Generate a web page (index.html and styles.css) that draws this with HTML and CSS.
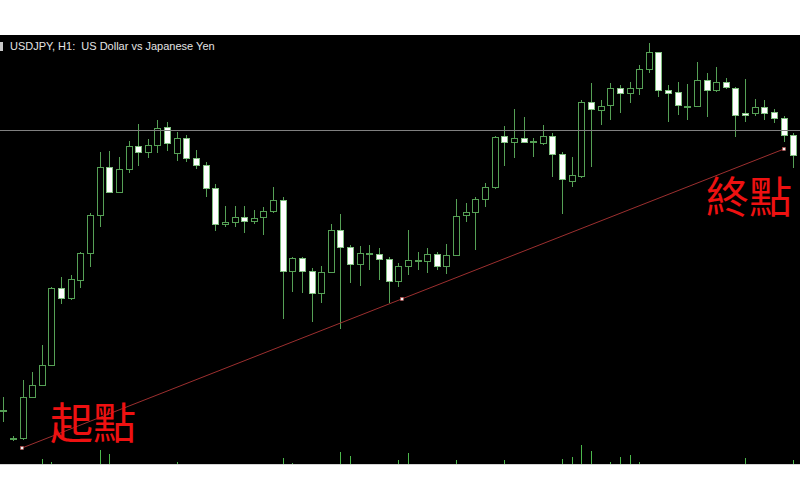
FILE: index.html
```html
<!DOCTYPE html>
<html lang="zh-Hant">
<head>
<meta charset="utf-8">
<title>USDJPY H1</title>
<link rel="stylesheet" href="styles.css">
</head>
<body>
<div class="chart">
  <div class="title"><span class="title-icon"></span><span class="title-text">USDJPY, H1:  US Dollar vs Japanese Yen</span></div>
  <svg class="plot" width="800" height="429" viewBox="0 35 800 429" xmlns="http://www.w3.org/2000/svg">
    <g class="volumes">
      <path d="M42.5 459V464 M51.5 462V464 M100.5 450V464 M109.5 454V464 M177.5 462V464 M283.5 458V464 M292.5 463V464 M340.5 452V464 M350.5 456V464 M398.5 460V464 M408.5 453V464 M456.5 460V464 M504.5 460V464 M562.5 459V464 M572.5 457V464 M581.5 445V464 M591.5 451V464 M610.5 462V464 M620.5 457V464 M630.5 455V464 M639.5 462V464 M745.5 458V464 M793.5 460V464"/>
    </g>
    <path class="wicks" d="M3.5 397V422 M13.5 436V441 M23.5 380V440 M32.5 372V397 M42.5 345V385 M51.5 287V365 M61.5 277V304 M71.5 275V300 M80.5 252V288 M90.5 213V267 M100.5 152V227 M109.5 151V192 M119.5 157V192 M129.5 141V173 M138.5 124V166 M148.5 139V158 M157.5 120V153 M167.5 122V151 M177.5 132V161 M186.5 135V162 M196.5 150V169 M206.5 162V197 M215.5 184V231 M225.5 206V227 M235.5 206V227 M244.5 206V233 M254.5 210V224 M263.5 207V235 M273.5 187V213 M283.5 197V319 M292.5 257V292 M302.5 257V293 M312.5 268V322 M321.5 266V303 M331.5 224V273 M340.5 214V329 M350.5 245V283 M360.5 246V286 M369.5 245V270 M379.5 248V280 M389.5 257V303 M398.5 263V287 M408.5 230V275 M418.5 252V270 M427.5 248V273 M437.5 252V270 M446.5 244V274 M456.5 199V255 M466.5 203V222 M475.5 197V250 M485.5 183V207 M495.5 136V189 M504.5 126V166 M514.5 109V158 M524.5 117V143 M533.5 138V157 M543.5 125V145 M552.5 133V177 M562.5 152V214 M572.5 157V187 M581.5 100V178 M591.5 83V167 M601.5 100V125 M610.5 83V120 M620.5 85V113 M630.5 82V103 M639.5 65V95 M649.5 43V73 M658.5 52V97 M668.5 85V122 M678.5 82V115 M687.5 84V120 M697.5 62V107 M707.5 73V117 M716.5 67V92 M726.5 78V89 M735.5 87V137 M745.5 79V122 M755.5 99V116 M764.5 100V120 M774.5 109V123 M784.5 116V142 M793.5 133V168"/>
    <g class="bull">
      <rect x="0.5" y="410.5" width="6" height="1"/>
      <rect x="10.5" y="438.5" width="6" height="1"/>
      <rect x="20.5" y="397.5" width="6" height="41"/>
      <rect x="29.5" y="385.5" width="6" height="12"/>
      <rect x="39.5" y="365.5" width="6" height="20"/>
      <rect x="48.5" y="288.5" width="6" height="77"/>
      <rect x="68.5" y="279.5" width="6" height="19"/>
      <rect x="77.5" y="253.5" width="6" height="27"/>
      <rect x="87.5" y="215.5" width="6" height="38"/>
      <rect x="97.5" y="167.5" width="6" height="48"/>
      <rect x="116.5" y="169.5" width="6" height="23"/>
      <rect x="126.5" y="146.5" width="6" height="23"/>
      <rect x="145.5" y="145.5" width="6" height="7"/>
      <rect x="154.5" y="128.5" width="6" height="17"/>
      <rect x="174.5" y="138.5" width="6" height="15"/>
      <rect x="222.5" y="222.5" width="6" height="2"/>
      <rect x="232.5" y="217.5" width="6" height="5"/>
      <rect x="251.5" y="218.5" width="6" height="3"/>
      <rect x="260.5" y="211.5" width="6" height="6"/>
      <rect x="270.5" y="200.5" width="6" height="11"/>
      <rect x="289.5" y="258.5" width="6" height="13"/>
      <rect x="318.5" y="272.5" width="6" height="21"/>
      <rect x="328.5" y="230.5" width="6" height="42"/>
      <rect x="357.5" y="253.5" width="6" height="11"/>
      <rect x="366.5" y="253.5" width="6" height="1"/>
      <rect x="395.5" y="266.5" width="6" height="15"/>
      <rect x="405.5" y="260.5" width="6" height="6"/>
      <rect x="415.5" y="260.5" width="6" height="1"/>
      <rect x="424.5" y="254.5" width="6" height="7"/>
      <rect x="443.5" y="255.5" width="6" height="11"/>
      <rect x="453.5" y="216.5" width="6" height="39"/>
      <rect x="463.5" y="212.5" width="6" height="3"/>
      <rect x="472.5" y="199.5" width="6" height="13"/>
      <rect x="482.5" y="187.5" width="6" height="12"/>
      <rect x="492.5" y="137.5" width="6" height="50"/>
      <rect x="511.5" y="138.5" width="6" height="4"/>
      <rect x="530.5" y="141.5" width="6" height="1"/>
      <rect x="540.5" y="136.5" width="6" height="7"/>
      <rect x="569.5" y="175.5" width="6" height="6"/>
      <rect x="578.5" y="102.5" width="6" height="74"/>
      <rect x="598.5" y="106.5" width="6" height="4"/>
      <rect x="607.5" y="88.5" width="6" height="17"/>
      <rect x="627.5" y="88.5" width="6" height="5"/>
      <rect x="636.5" y="69.5" width="6" height="19"/>
      <rect x="646.5" y="52.5" width="6" height="17"/>
      <rect x="684.5" y="106.5" width="6" height="1"/>
      <rect x="694.5" y="80.5" width="6" height="26"/>
      <rect x="713.5" y="82.5" width="6" height="8"/>
      <rect x="752.5" y="107.5" width="6" height="6"/>
    </g>
    <g class="bear">
      <rect x="58.5" y="288.5" width="6" height="10"/>
      <rect x="106.5" y="167.5" width="6" height="25"/>
      <rect x="135.5" y="146.5" width="6" height="6"/>
      <rect x="164.5" y="127.5" width="6" height="16"/>
      <rect x="183.5" y="138.5" width="6" height="20"/>
      <rect x="193.5" y="158.5" width="6" height="7"/>
      <rect x="203.5" y="165.5" width="6" height="23"/>
      <rect x="212.5" y="188.5" width="6" height="36"/>
      <rect x="241.5" y="217.5" width="6" height="4"/>
      <rect x="280.5" y="200.5" width="6" height="71"/>
      <rect x="299.5" y="258.5" width="6" height="13"/>
      <rect x="309.5" y="271.5" width="6" height="22"/>
      <rect x="337.5" y="230.5" width="6" height="17"/>
      <rect x="347.5" y="247.5" width="6" height="17"/>
      <rect x="376.5" y="254.5" width="6" height="5"/>
      <rect x="386.5" y="259.5" width="6" height="22"/>
      <rect x="434.5" y="254.5" width="6" height="12"/>
      <rect x="501.5" y="136.5" width="6" height="6"/>
      <rect x="521.5" y="138.5" width="6" height="4"/>
      <rect x="549.5" y="136.5" width="6" height="18"/>
      <rect x="559.5" y="154.5" width="6" height="25"/>
      <rect x="588.5" y="102.5" width="6" height="7"/>
      <rect x="617.5" y="88.5" width="6" height="5"/>
      <rect x="655.5" y="52.5" width="6" height="38"/>
      <rect x="665.5" y="90.5" width="6" height="3"/>
      <rect x="675.5" y="92.5" width="6" height="13"/>
      <rect x="704.5" y="80.5" width="6" height="10"/>
      <rect x="723.5" y="82.5" width="6" height="5"/>
      <rect x="732.5" y="88.5" width="6" height="27"/>
      <rect x="742.5" y="113.5" width="6" height="2"/>
      <rect x="761.5" y="107.5" width="6" height="6"/>
      <rect x="771.5" y="112.5" width="6" height="6"/>
      <rect x="781.5" y="118.5" width="6" height="17"/>
      <rect x="790.5" y="135.5" width="6" height="20"/>
    </g>
    <path class="hline" d="M0 130.5H800"/>
    <path class="trend" d="M22 448L784 149"/>
    <g class="anchors">
      <rect x="20.5" y="446.5" width="3" height="3"/>
      <rect x="400.5" y="297.5" width="3" height="3"/>
      <rect x="782.5" y="147.5" width="3" height="3"/>
    </g>
  </svg>
  <span class="label label-start">起點</span>
  <span class="label label-end">終點</span>
</div>
</body>
</html>
```

FILE: styles.css
```css
html, body {
  margin: 0;
  padding: 0;
  background: #ffffff;
}

body {
  width: 800px;
  height: 500px;
  overflow: hidden;
}

.chart {
  position: relative;
  margin-top: 35px;
  width: 800px;
  height: 429px;
  background: #000000;
  border-bottom: 1px solid #d4d4d4;
}

.plot {
  display: block;
}

.title {
  position: absolute;
  left: 0;
  top: 5px;
  display: flex;
  align-items: center;
  height: 13px;
  font-family: "Liberation Sans", Arial, sans-serif;
  font-size: 11px;
  line-height: 13px;
  color: #e4e4e4;
}

.title-icon {
  width: 3px;
  height: 9px;
  margin-right: 7px;
  background: #c8c8c8;
}

.title-text {
  white-space: pre;
}

.volumes path {
  fill: none;
  stroke: #4cb84c;
  stroke-width: 1;
}

.wicks {
  fill: none;
  stroke: #55a055;
  stroke-width: 1;
}

.bull rect {
  fill: #000000;
  stroke: #55a055;
  stroke-width: 1;
}

.bear rect {
  fill: #ffffff;
  stroke: #7fbf7f;
  stroke-width: 1;
}

.hline {
  fill: none;
  stroke: #808080;
  stroke-width: 1;
}

.trend {
  fill: none;
  stroke: #9c2f2f;
  stroke-width: 1;
}

.anchors rect {
  fill: #f4f4f4;
  stroke: #c04040;
  stroke-width: 0.5;
}

.label {
  position: absolute;
  font-family: "Noto Sans CJK TC", "Noto Sans CJK SC", sans-serif;
  font-size: 43px;
  line-height: 1;
  font-weight: 400;
  color: #ee1111;
  white-space: nowrap;
}

.label-start {
  left: 50px;
  top: 364px;
}

.label-end {
  left: 706px;
  top: 138px;
}
```
